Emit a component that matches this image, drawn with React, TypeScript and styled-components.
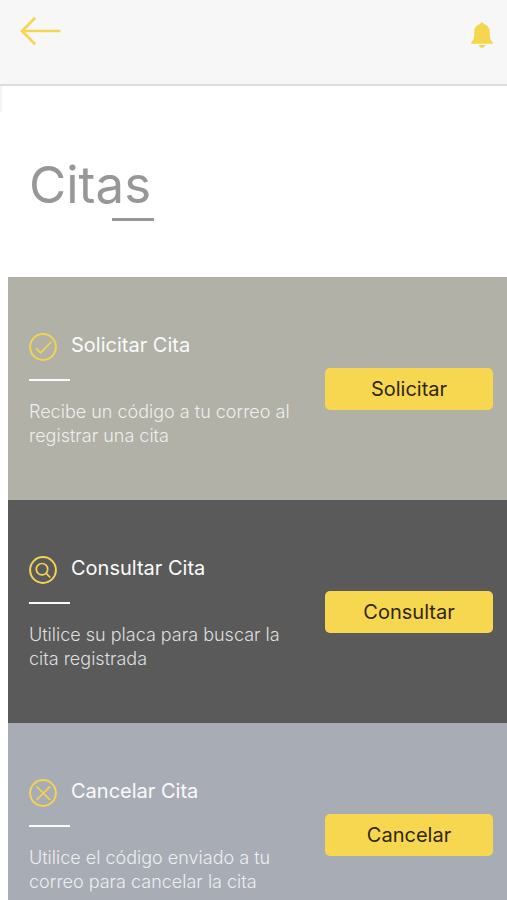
import React from "react";
import styled, { createGlobalStyle } from "styled-components";

const GlobalStyle = createGlobalStyle`
  *, *::before, *::after { box-sizing: border-box; }
  body {
    margin: 0;
    background: #ffffff;
    font-family: Inter, "Liberation Sans", sans-serif;
    overflow-x: hidden;
  }
`;

const TopBar = styled.header`
  display: flex;
  align-items: flex-start;
  justify-content: space-between;
  height: 86px;
  padding: 16px 12px 0 20px;
  background: #f7f7f7;
  border-bottom: 2px solid #dcdcdc;
`;

const IconButton = styled.button`
  display: flex;
  padding: 0;
  border: 0;
  background: none;
  color: #f5d64f;
  cursor: pointer;

  svg { display: block; }
`;

const BellButton = styled(IconButton)`
  padding-top: 6px;
`;

const Hero = styled.section`
  padding: 66px 29px 56px;
  background: linear-gradient(#f4f4f4, #f4f4f4) 0 0 / 2px 26px no-repeat;
`;

const Heading = styled.h1`
  display: flex;
  flex-direction: column;
  width: 125px;
  margin: 0;
  color: #979797;
  font-size: 51px;
  font-weight: 400;
  line-height: 66px;

  &::after {
    content: "";
    align-self: flex-end;
    width: 42px;
    height: 3px;
    background: #979797;
  }
`;

const Cards = styled.main`
  margin-left: 8px;
`;

const Card = styled.section<{ $tone: string }>`
  display: flex;
  align-items: center;
  justify-content: space-between;
  gap: 12px;
  padding: 0 14px 0 21px;
  background: ${(p) => p.$tone};
`;

const Info = styled.div`
  flex: 1;
  max-width: 272px;
  padding: 56px 0 52px;
`;

const TitleRow = styled.div`
  display: flex;
  align-items: center;
  gap: 14px;
  height: 28px;
  color: #f3d352;

  svg { flex: none; }
`;

const CardTitle = styled.h2`
  margin: 0;
  padding-bottom: 4px;
  color: #fafafa;
  font-size: 20px;
  font-weight: 400;
  line-height: 24px;
`;

const Rule = styled.div`
  width: 41px;
  height: 2px;
  margin: 18px 0 19px;
  background: #fafafa;
`;

const Description = styled.p`
  margin: 0;
  color: rgba(255, 255, 255, 0.82);
  font-size: 18px;
  font-weight: 300;
  line-height: 24px;
`;

const ActionButton = styled.button`
  flex: none;
  width: 168px;
  height: 42px;
  padding: 0;
  border: 0;
  border-radius: 5px;
  background: #f7d74f;
  color: #2e270c;
  font-family: inherit;
  font-size: 20px;
  font-weight: 400;
  cursor: pointer;
`;

const RoundIcon = ({ children }: { children: React.ReactNode }) => (
  <svg
    width="28"
    height="28"
    viewBox="0 0 28 28"
    fill="none"
    stroke="currentColor"
    strokeWidth="1.7"
    strokeLinecap="round"
    strokeLinejoin="round"
    aria-hidden="true"
  >
    <circle cx="14" cy="14" r="12.9" strokeWidth="2" />
    {children}
  </svg>
);

const items = [
  {
    title: "Solicitar Cita",
    text: "Recibe un código a tu correo al registrar una cita",
    action: "Solicitar",
    tone: "#b1b1a8",
    icon: <path d="M7.4 15.4l4.2 4.4L22 9.2" />,
  },
  {
    title: "Consultar Cita",
    text: "Utilice su placa para buscar la cita registrada",
    action: "Consultar",
    tone: "#5a5a5a",
    icon: (
      <>
        <circle cx="13" cy="13.2" r="5.7" />
        <path d="M17.2 17.4l3.6 3.6" />
      </>
    ),
  },
  {
    title: "Cancelar Cita",
    text: "Utilice el código enviado a tu correo para cancelar la cita",
    action: "Cancelar",
    tone: "#a8adb5",
    icon: <path d="M8 7.9l12.6 12.6M20.6 7.9L8 20.5" />,
  },
];

export default function App() {
  return (
    <>
      <GlobalStyle />
      <TopBar>
        <IconButton type="button" aria-label="Volver">
          <svg width="42" height="30" viewBox="0 0 42 30" fill="none" stroke="currentColor" strokeWidth="2.7">
            <path d="M15.2 1.7L2 15l13.2 13.3M2 15h38.4" />
          </svg>
        </IconButton>
        <BellButton type="button" aria-label="Notificaciones">
          <svg width="26" height="27" viewBox="0 0 26 27" fill="currentColor">
            <path d="M13 .6c1 0 1.7.6 1.9 1.5 3.7.9 5.8 3.7 5.8 7.5 0 6.3.7 8.500 3.300 11.300v.8H2v-.8c2.600-2.800 3.300-5 3.300-11.300 0-3.800 2.100-6.600 5.800-7.500C11.300 1.200 12 .6 13 .6z" />
            <path d="M9.800 22.900h6.400c-.3 1.700-1.500 2.900-3.200 2.900s-2.900-1.200-3.200-2.900z" />
          </svg>
        </BellButton>
      </TopBar>
      <Hero>
        <Heading>Citas</Heading>
      </Hero>
      <Cards>
        {items.map((item) => (
          <Card key={item.title} $tone={item.tone}>
            <Info>
              <TitleRow>
                <RoundIcon>{item.icon}</RoundIcon>
                <CardTitle>{item.title}</CardTitle>
              </TitleRow>
              <Rule />
              <Description>{item.text}</Description>
            </Info>
            <ActionButton type="button">{item.action}</ActionButton>
          </Card>
        ))}
      </Cards>
    </>
  );
}
